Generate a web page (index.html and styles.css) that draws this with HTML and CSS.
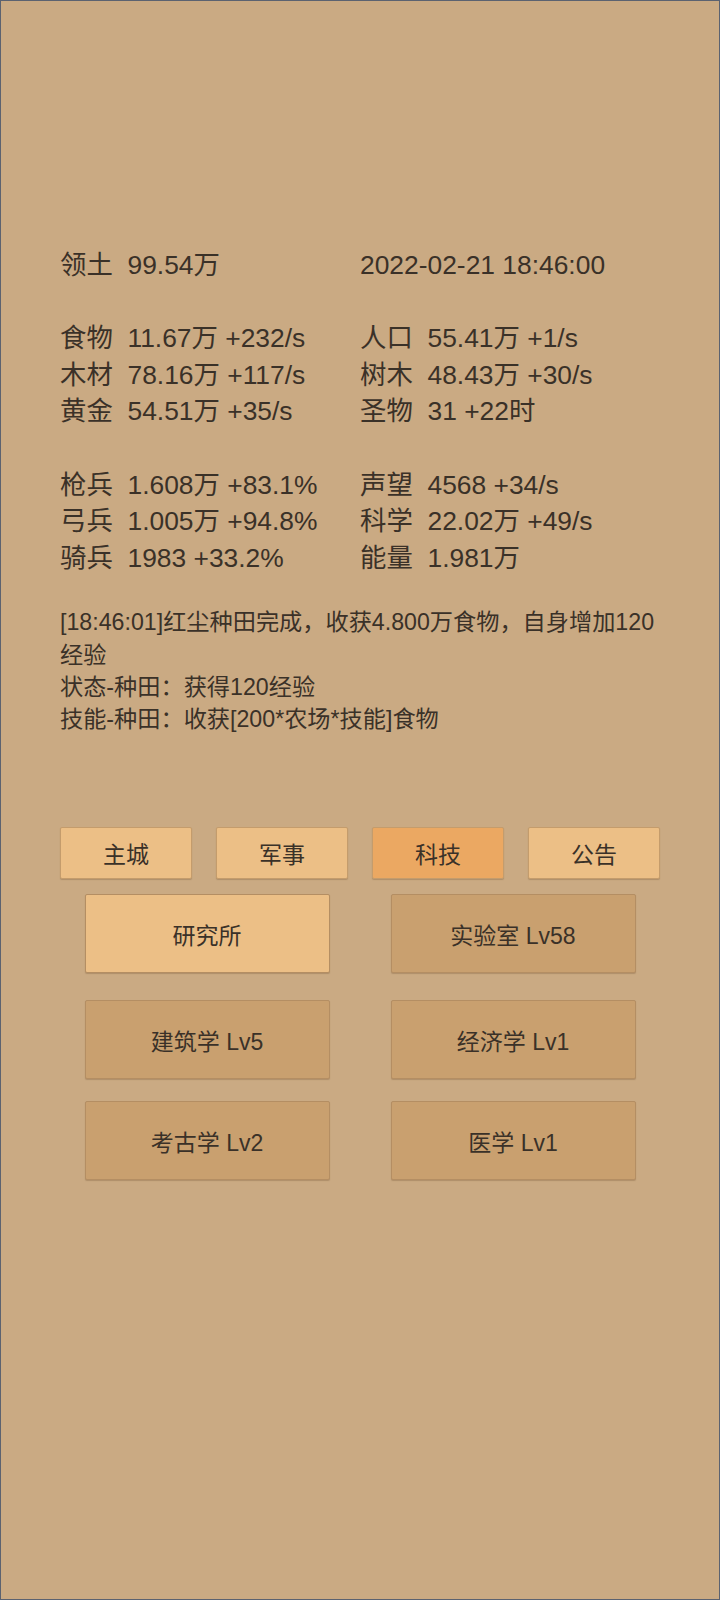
FILE: index.html
```html
<!DOCTYPE html>
<html lang="zh-CN">
<head>
<meta charset="utf-8">
<title>领土</title>
<link rel="stylesheet" href="styles.css">
</head>
<body>
<div class="screen">
  <section class="stats">
    <div class="row"><div class="cell"><span class="k">领土</span><span class="v">99.54万</span></div><div class="cell">2022-02-21 18:46:00</div></div>
    <div class="row"></div>
    <div class="row"><div class="cell"><span class="k">食物</span><span class="v">11.67万 +232/s</span></div><div class="cell"><span class="k">人口</span><span class="v">55.41万 +1/s</span></div></div>
    <div class="row"><div class="cell"><span class="k">木材</span><span class="v">78.16万 +117/s</span></div><div class="cell"><span class="k">树木</span><span class="v">48.43万 +30/s</span></div></div>
    <div class="row"><div class="cell"><span class="k">黄金</span><span class="v">54.51万 +35/s</span></div><div class="cell"><span class="k">圣物</span><span class="v">31 +22时</span></div></div>
    <div class="row"></div>
    <div class="row"><div class="cell"><span class="k">枪兵</span><span class="v">1.608万 +83.1%</span></div><div class="cell"><span class="k">声望</span><span class="v">4568 +34/s</span></div></div>
    <div class="row"><div class="cell"><span class="k">弓兵</span><span class="v">1.005万 +94.8%</span></div><div class="cell"><span class="k">科学</span><span class="v">22.02万 +49/s</span></div></div>
    <div class="row"><div class="cell"><span class="k">骑兵</span><span class="v">1983 +33.2%</span></div><div class="cell"><span class="k">能量</span><span class="v">1.981万</span></div></div>
  </section>
  <section class="log">
    <p>[18:46:01]红尘种田完成，收获4.800万食物，自身增加120经验</p>
    <p>状态-种田：获得120经验</p>
    <p>技能-种田：收获[200*农场*技能]食物</p>
  </section>
  <nav class="tabs">
    <div class="tab">主城</div>
    <div class="tab">军事</div>
    <div class="tab active">科技</div>
    <div class="tab">公告</div>
  </nav>
  <div class="techs">
    <div class="tech-row first">
      <div class="tech light">研究所</div>
      <div class="tech">实验室 Lv58</div>
    </div>
    <div class="tech-row second">
      <div class="tech">建筑学 Lv5</div>
      <div class="tech">经济学 Lv1</div>
    </div>
    <div class="tech-row">
      <div class="tech">考古学 Lv2</div>
      <div class="tech">医学 Lv1</div>
    </div>
  </div>
</div>
</body>
</html>
```

FILE: styles.css
```css
* { box-sizing: border-box; }
html, body { margin: 0; padding: 0; }
body {
  width: 720px;
  height: 1600px;
  background: #caaa83;
  font-family: "Liberation Sans", "Noto Sans CJK SC", sans-serif;
  color: #3a3128;
}
.screen {
  width: 720px;
  height: 1600px;
  border: 1px solid #5b6270;
  padding: 246px 59px 0 59px;
}
.stats {
  font-size: 26.4px;
  line-height: 36.6px;
}
.row {
  display: grid;
  grid-template-columns: 300px 300px;
  height: 36.6px;
  white-space: nowrap;
}
.k { margin-right: 14.7px; }
.log {
  margin-top: 30px;
  font-size: 23.2px;
  line-height: 32.2px;
  width: 600px;
}
.log p { margin: 0; }
.tabs {
  margin-top: 92px;
  width: 600px;
  display: flex;
  justify-content: space-between;
}
.tab {
  width: 132px;
  height: 52px;
  background: #ecbf86;
  border: 1px solid #c49c6c;
  border-radius: 2px;
  box-shadow: 0 1px 1px rgba(90, 60, 30, 0.25);
  display: flex;
  align-items: center;
  justify-content: center;
  font-size: 23px;
}
.tab.active { background: #eba862; }
.techs {
  width: 551px;
  margin: 15px auto 0;
}
.tech-row {
  display: flex;
  justify-content: space-between;
}
.tech-row.first { margin-bottom: 27px; }
.tech-row.second { margin-bottom: 22px; }
.tech {
  width: 245px;
  height: 79px;
  background: #c9a06f;
  border: 1px solid #b48e63;
  border-radius: 2px;
  box-shadow: 0 1px 1px rgba(90, 60, 30, 0.25);
  display: flex;
  align-items: center;
  justify-content: center;
  font-size: 23px;
}
.tech.light { background: #ecbf86; }
```
